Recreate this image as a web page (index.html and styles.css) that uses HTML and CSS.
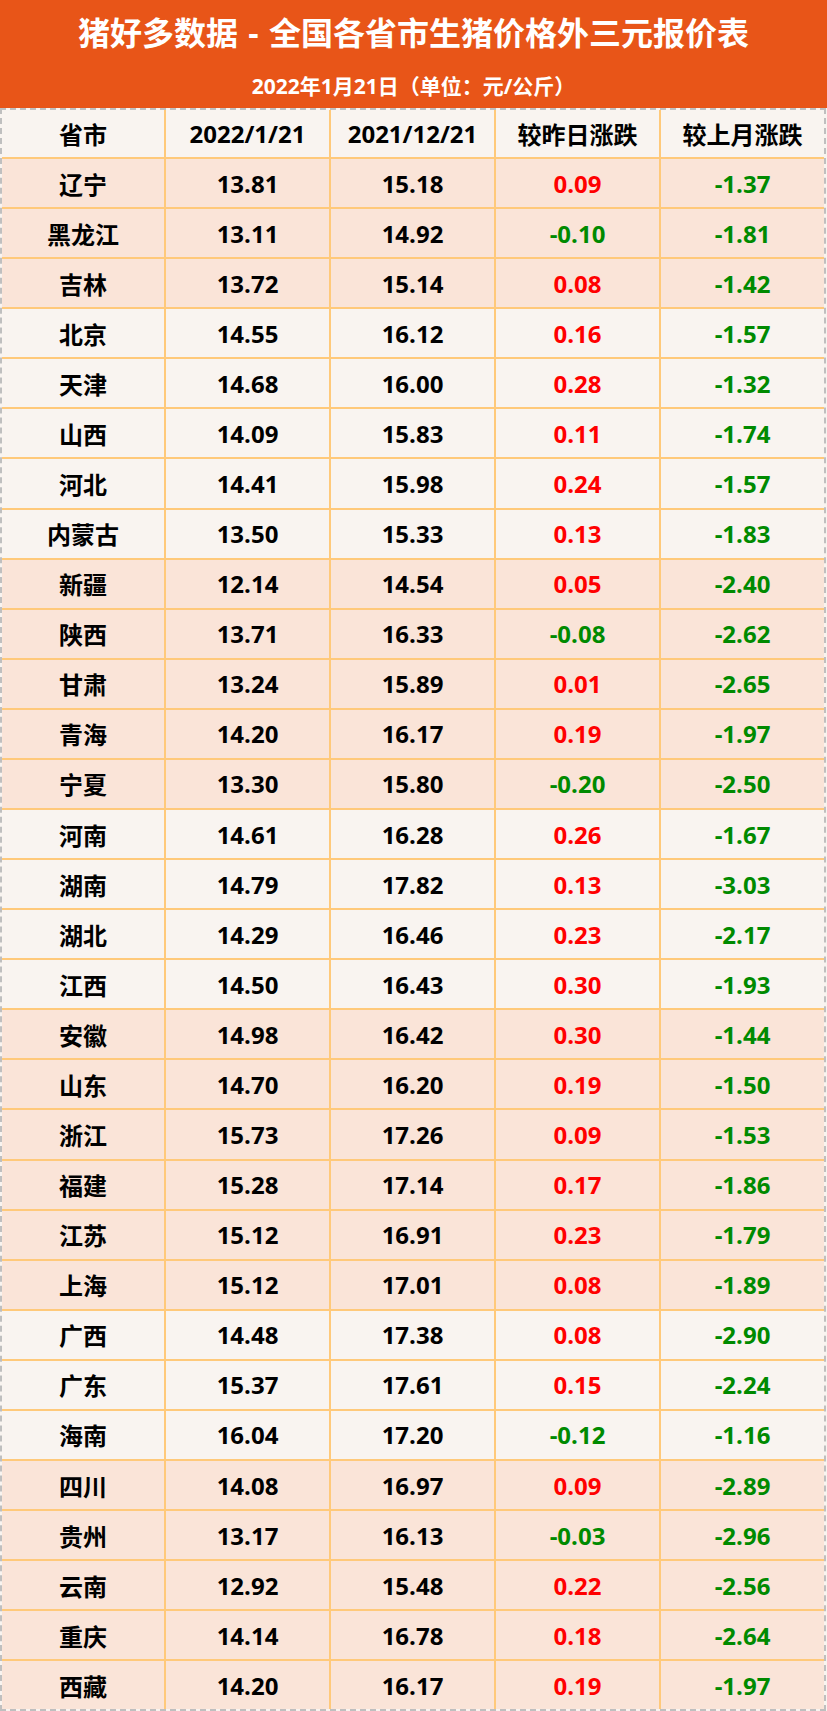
FILE: index.html
```html
<!DOCTYPE html>
<html lang="zh-CN">
<head>
<meta charset="utf-8">
<title>猪好多数据</title>
<link rel="stylesheet" href="styles.css">
</head>
<body>
<div class="page">
  <header class="banner">
    <h1 class="title">猪好多数据 - 全国各省市生猪价格外三元报价表</h1>
    <p class="subtitle">2022年1月21日（单位：元/公斤）</p>
  </header>
  <div class="table">
    <div class="row head"><div>省市</div><div>2022/1/21</div><div>2021/12/21</div><div>较昨日涨跌</div><div>较上月涨跌</div></div>
    <div class="row"><div>辽宁</div><div>13.81</div><div>15.18</div><div class="up">0.09</div><div class="down">-1.37</div></div>
    <div class="row"><div>黑龙江</div><div>13.11</div><div>14.92</div><div class="down">-0.10</div><div class="down">-1.81</div></div>
    <div class="row"><div>吉林</div><div>13.72</div><div>15.14</div><div class="up">0.08</div><div class="down">-1.42</div></div>
    <div class="row light"><div>北京</div><div>14.55</div><div>16.12</div><div class="up">0.16</div><div class="down">-1.57</div></div>
    <div class="row light"><div>天津</div><div>14.68</div><div>16.00</div><div class="up">0.28</div><div class="down">-1.32</div></div>
    <div class="row light"><div>山西</div><div>14.09</div><div>15.83</div><div class="up">0.11</div><div class="down">-1.74</div></div>
    <div class="row light"><div>河北</div><div>14.41</div><div>15.98</div><div class="up">0.24</div><div class="down">-1.57</div></div>
    <div class="row light"><div>内蒙古</div><div>13.50</div><div>15.33</div><div class="up">0.13</div><div class="down">-1.83</div></div>
    <div class="row"><div>新疆</div><div>12.14</div><div>14.54</div><div class="up">0.05</div><div class="down">-2.40</div></div>
    <div class="row"><div>陕西</div><div>13.71</div><div>16.33</div><div class="down">-0.08</div><div class="down">-2.62</div></div>
    <div class="row"><div>甘肃</div><div>13.24</div><div>15.89</div><div class="up">0.01</div><div class="down">-2.65</div></div>
    <div class="row"><div>青海</div><div>14.20</div><div>16.17</div><div class="up">0.19</div><div class="down">-1.97</div></div>
    <div class="row"><div>宁夏</div><div>13.30</div><div>15.80</div><div class="down">-0.20</div><div class="down">-2.50</div></div>
    <div class="row light"><div>河南</div><div>14.61</div><div>16.28</div><div class="up">0.26</div><div class="down">-1.67</div></div>
    <div class="row light"><div>湖南</div><div>14.79</div><div>17.82</div><div class="up">0.13</div><div class="down">-3.03</div></div>
    <div class="row light"><div>湖北</div><div>14.29</div><div>16.46</div><div class="up">0.23</div><div class="down">-2.17</div></div>
    <div class="row light"><div>江西</div><div>14.50</div><div>16.43</div><div class="up">0.30</div><div class="down">-1.93</div></div>
    <div class="row"><div>安徽</div><div>14.98</div><div>16.42</div><div class="up">0.30</div><div class="down">-1.44</div></div>
    <div class="row"><div>山东</div><div>14.70</div><div>16.20</div><div class="up">0.19</div><div class="down">-1.50</div></div>
    <div class="row"><div>浙江</div><div>15.73</div><div>17.26</div><div class="up">0.09</div><div class="down">-1.53</div></div>
    <div class="row"><div>福建</div><div>15.28</div><div>17.14</div><div class="up">0.17</div><div class="down">-1.86</div></div>
    <div class="row"><div>江苏</div><div>15.12</div><div>16.91</div><div class="up">0.23</div><div class="down">-1.79</div></div>
    <div class="row"><div>上海</div><div>15.12</div><div>17.01</div><div class="up">0.08</div><div class="down">-1.89</div></div>
    <div class="row light"><div>广西</div><div>14.48</div><div>17.38</div><div class="up">0.08</div><div class="down">-2.90</div></div>
    <div class="row light"><div>广东</div><div>15.37</div><div>17.61</div><div class="up">0.15</div><div class="down">-2.24</div></div>
    <div class="row light"><div>海南</div><div>16.04</div><div>17.20</div><div class="down">-0.12</div><div class="down">-1.16</div></div>
    <div class="row"><div>四川</div><div>14.08</div><div>16.97</div><div class="up">0.09</div><div class="down">-2.89</div></div>
    <div class="row"><div>贵州</div><div>13.17</div><div>16.13</div><div class="down">-0.03</div><div class="down">-2.96</div></div>
    <div class="row"><div>云南</div><div>12.92</div><div>15.48</div><div class="up">0.22</div><div class="down">-2.56</div></div>
    <div class="row"><div>重庆</div><div>14.14</div><div>16.78</div><div class="up">0.18</div><div class="down">-2.64</div></div>
    <div class="row"><div>西藏</div><div>14.20</div><div>16.17</div><div class="up">0.19</div><div class="down">-1.97</div></div>
  </div>
</div>
</body>
</html>
```
FILE: styles.css
```css
html, body {
  margin: 0;
  padding: 0;
}
body {
  background: #f9f4f0;
  font-family: "Open Sans", "Noto Sans CJK SC", sans-serif;
  font-weight: 700;
  color: #000;
}
.page {
  width: 827px;
}
.banner {
  height: 108px;
  background: #e85518;
  color: #fff;
  display: flex;
  flex-direction: column;
  align-items: center;
  box-sizing: border-box;
  padding-top: 13px;
}
.title {
  margin: 0;
  font-size: 32px;
  line-height: 40px;
  font-weight: 700;
  word-spacing: 2px;
}
.subtitle {
  margin: 19px 0 0;
  font-size: 21px;
  line-height: 28px;
  font-weight: 700;
}
.table {
  width: 826px;
  box-sizing: border-box;
  border: 2px dashed #bfbfbf;
  background: #ffc97a;
  background-clip: padding-box;
  display: flex;
  flex-direction: column;
  gap: 2px;
}
.row {
  display: grid;
  grid-template-columns: 162px 163px 163px 163px 1fr;
  column-gap: 2px;
  height: 48.08px;
}
.row > div {
  background: #fae4d8;
  display: flex;
  align-items: center;
  justify-content: center;
  font-size: 24px;
}
.row.light > div,
.row.head > div {
  background: #f9f4f0;
}
.row.head {
  height: 47px;
}
.up {
  color: #ff0000;
}
.down {
  color: #008a00;
}
```
